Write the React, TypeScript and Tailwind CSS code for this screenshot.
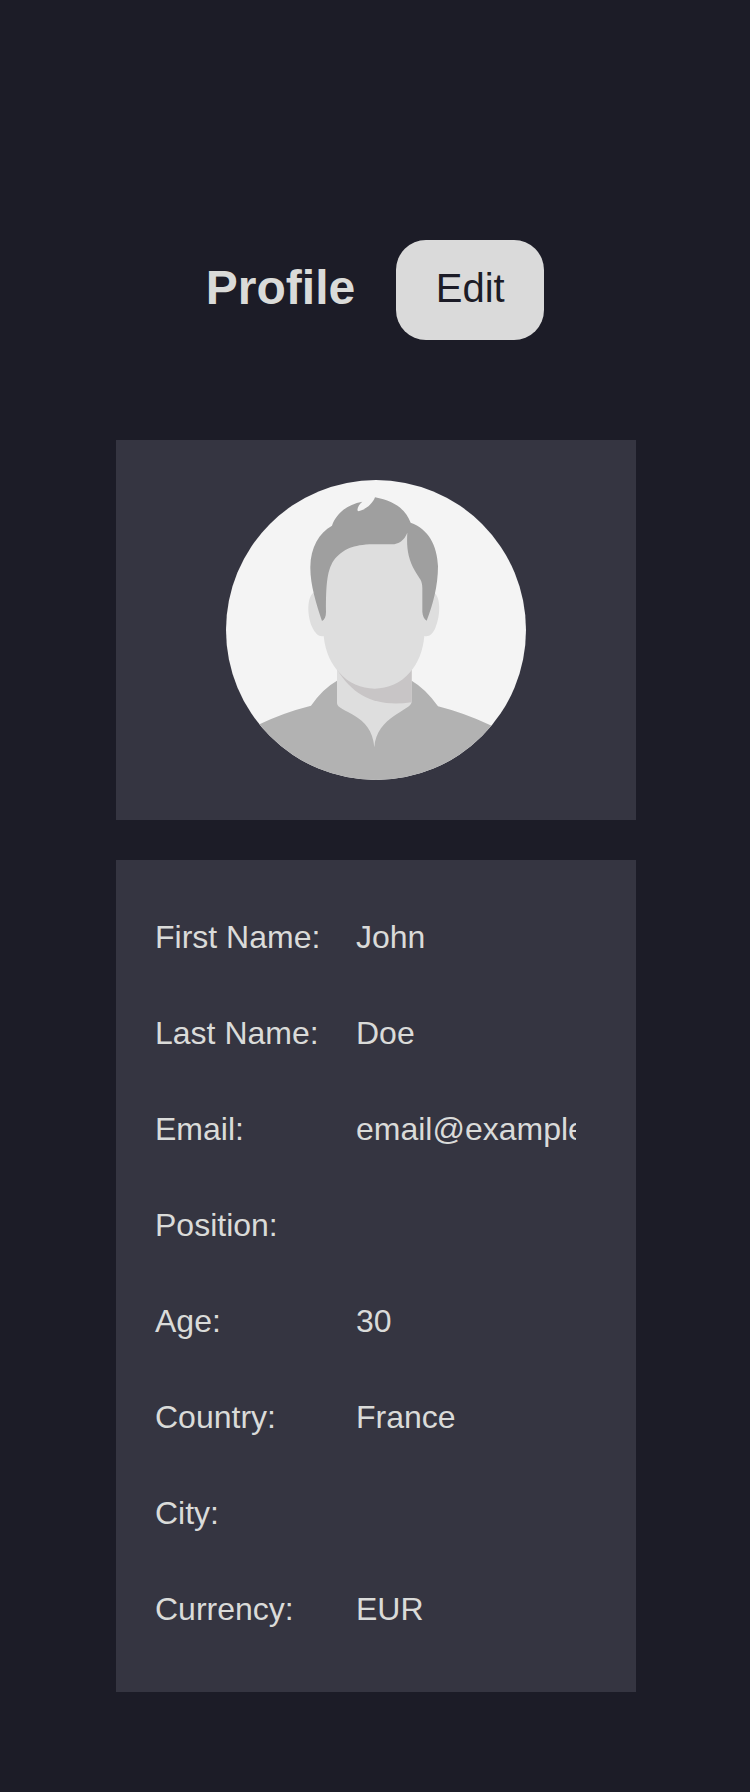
const rows: [string, string][] = [
  ["First Name:", "John"],
  ["Last Name:", "Doe"],
  ["Email:", "email@example.com"],
  ["Position:", ""],
  ["Age:", "30"],
  ["Country:", "France"],
  ["City:", ""],
  ["Currency:", "EUR"],
];

function Avatar() {
  return (
    <svg viewBox="0 0 900 900" className="size-[300px] rounded-full bg-[#f4f4f4]" role="img" aria-label="Avatar">
      <g transform="translate(-48 -30)">
        <path fill="#b2b2b2" d="M0 930V830Q60 805 150 762Q220 728 303 707Q338 656 381 632H605Q648 657 684 709Q760 728 845 767Q910 800 960 840V930Z" />
        <path fill="#dedede" d="M381 590H605V696C603 722 500 738 493 832C486 730 383 728 381 700Z" />
        <path fill="#c8c5c6" d="M381 598C430 680 500 712 605 697V596Z" />
        <path fill="#dedede" d="M316 365C288 375 292 440 306 470C316 492 328 501 341 498C346 550 366 583 387 607C442 672 545 673 600 607C624 580 639 543 643 498C657 502 669 491 676 474C692 435 693 382 671 366L620 170H370Z" />
        <path fill="#9f9f9f" d="M366 167C378 132 410 103 457 95C447 103 439 117 444 124C467 120 488 101 495 82C550 92 586 116 602 158C655 177 682 226 684 289C684 348 668 407 650 452C642 447 638 438 637 425V354C637 330 629 328 615 303C594 267 589 232 592 188C582 212 567 222 545 223H489C427 224 401 239 376 265C351 296 348 342 348 425C348 440 344 449 336 453C319 402 300 343 301 290C302 232 327 189 366 167Z" />
      </g>
    </svg>
  );
}

export default function App() {
  return (
    <main className="flex min-h-[1792px] flex-col items-center bg-[#1c1c27] pt-60 font-['Liberation_Sans',Arial,sans-serif] text-[#dadbd9]">
      <header className="flex items-center gap-[41px]">
        <h1 className="pb-1.5 text-5xl font-bold leading-[55px]">Profile</h1>
        <button className="h-[100px] w-[148px] rounded-[30px] bg-[#dadada] pb-1 text-[40px] leading-[46px] text-[#1c1c27]">Edit</button>
      </header>
      <section className="mt-[100px] ml-[2px] flex h-[380px] w-[520px] items-center justify-center bg-[#353541]">
        <Avatar />
      </section>
      <dl className="mt-10 ml-[2px] w-[520px] bg-[#353541] py-8 pl-[39px] pr-[60px] text-[32px] leading-9">
        {rows.map(([label, value]) => (
          <div key={label} className="grid h-24 grid-cols-[201px_1fr] items-center pb-1.5">
            <dt>{label}</dt>
            <dd className="overflow-hidden whitespace-nowrap">{value}</dd>
          </div>
        ))}
      </dl>
    </main>
  );
}
